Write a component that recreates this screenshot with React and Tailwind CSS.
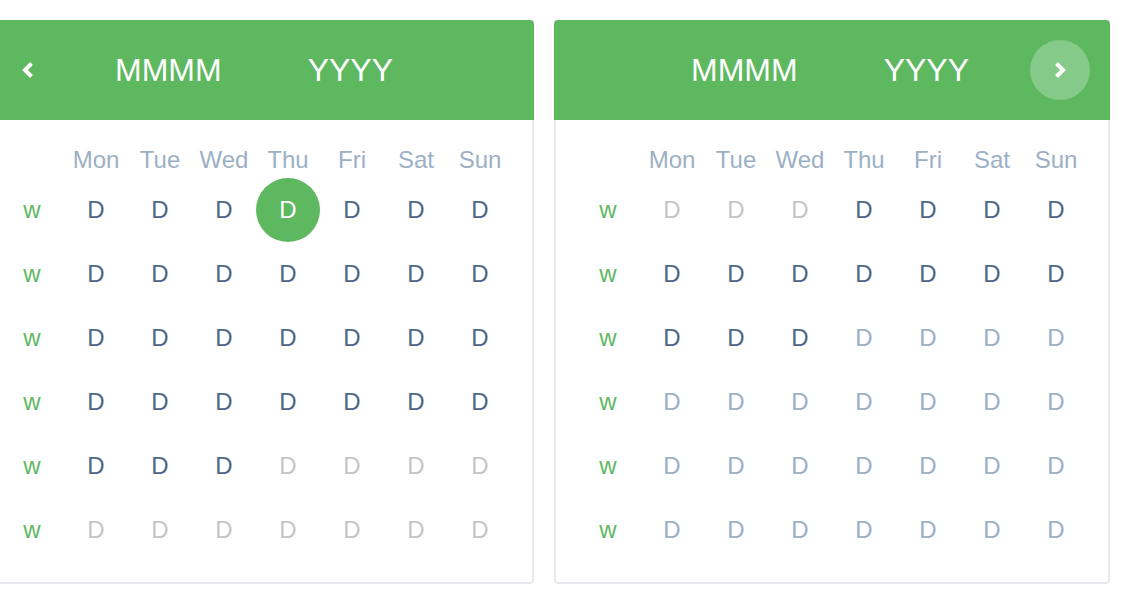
import React from 'react';

const DAYS = ['Mon', 'Tue', 'Wed', 'Thu', 'Fri', 'Sat', 'Sun'];

// d = dark (current month), g = gray (other month), s = slate (other month, softer)
const LEFT_ROWS = [
  ['d', 'd', 'd', 'sel', 'd', 'd', 'd'],
  ['d', 'd', 'd', 'd', 'd', 'd', 'd'],
  ['d', 'd', 'd', 'd', 'd', 'd', 'd'],
  ['d', 'd', 'd', 'd', 'd', 'd', 'd'],
  ['d', 'd', 'd', 'g', 'g', 'g', 'g'],
  ['g', 'g', 'g', 'g', 'g', 'g', 'g'],
];

const RIGHT_ROWS = [
  ['g', 'g', 'g', 'd', 'd', 'd', 'd'],
  ['d', 'd', 'd', 'd', 'd', 'd', 'd'],
  ['d', 'd', 'd', 's', 's', 's', 's'],
  ['s', 's', 's', 's', 's', 's', 's'],
  ['s', 's', 's', 's', 's', 's', 's'],
  ['s', 's', 's', 's', 's', 's', 's'],
];

const Chevron = ({ dir }) => (
  <svg width="12" height="18" viewBox="0 0 12 18" fill="none">
    <polyline
      points={dir === 'left' ? '9.5,2.5 3,9 9.5,15.5' : '2.5,2.5 9,9 2.5,15.5'}
      stroke="white"
      strokeWidth="4"
      strokeLinecap="butt"
      strokeLinejoin="miter"
    />
  </svg>
);

const DayCell = ({ kind }) => {
  if (kind === 'sel') {
    return (
      <div className="w-16 h-16 flex items-center justify-center">
        <div className="w-16 h-16 rounded-full bg-[#5db860] text-white flex items-center justify-center">D</div>
      </div>
    );
  }
  const color = kind === 'd' ? 'text-[#4b6785]' : kind === 's' ? 'text-[#9cb0c5]' : 'text-[#c5c5c5]';
  return <div className={`w-16 h-16 flex items-center justify-center ${color}`}>D</div>;
};

const Calendar = ({ rows, showPrev, showNext }) => (
  <div className="w-[556px] shrink-0">
    <div className="h-[100px] bg-[#5db860] rounded-t flex items-center px-5 text-white">
      <div className="w-[60px] h-[60px] flex items-center justify-center">
        {showPrev && <Chevron dir="left" />}
      </div>
      <div className="flex-1 flex items-center justify-center gap-[86px] text-[32px] pr-[4px]">
        <span>MMMM</span>
        <span>YYYY</span>
      </div>
      <div className="w-[60px] h-[60px] flex items-center justify-center">
        {showNext && (
          <div className="w-[60px] h-[60px] rounded-full bg-white/25 flex items-center justify-center">
            <Chevron dir="right" />
          </div>
        )}
      </div>
    </div>
    <div className="border-2 border-t-0 border-[#e6e9ed] rounded-b pt-[22px] pb-[20px] px-5 text-[24px]">
      <div className="flex h-9 items-center text-[#9cb0c5]">
        <div className="w-16" />
        {DAYS.map((d) => (
          <div key={d} className="w-16 text-center">{d}</div>
        ))}
      </div>
      {rows.map((row, i) => (
        <div key={i} className="flex">
          <div className="w-16 h-16 flex items-center justify-center text-[#5db860]">w</div>
          {row.map((kind, j) => (
            <DayCell key={j} kind={kind} />
          ))}
        </div>
      ))}
    </div>
  </div>
);

export default function App() {
  return (
    <div
      className="w-[1130px] h-[608px] overflow-hidden bg-white"
      style={{ fontFamily: '"Liberation Sans", Arial, sans-serif' }}
    >
      <div className="flex gap-5 pt-5 ml-[-22px]">
        <Calendar rows={LEFT_ROWS} showPrev />
        <Calendar rows={RIGHT_ROWS} showNext />
      </div>
    </div>
  );
}
